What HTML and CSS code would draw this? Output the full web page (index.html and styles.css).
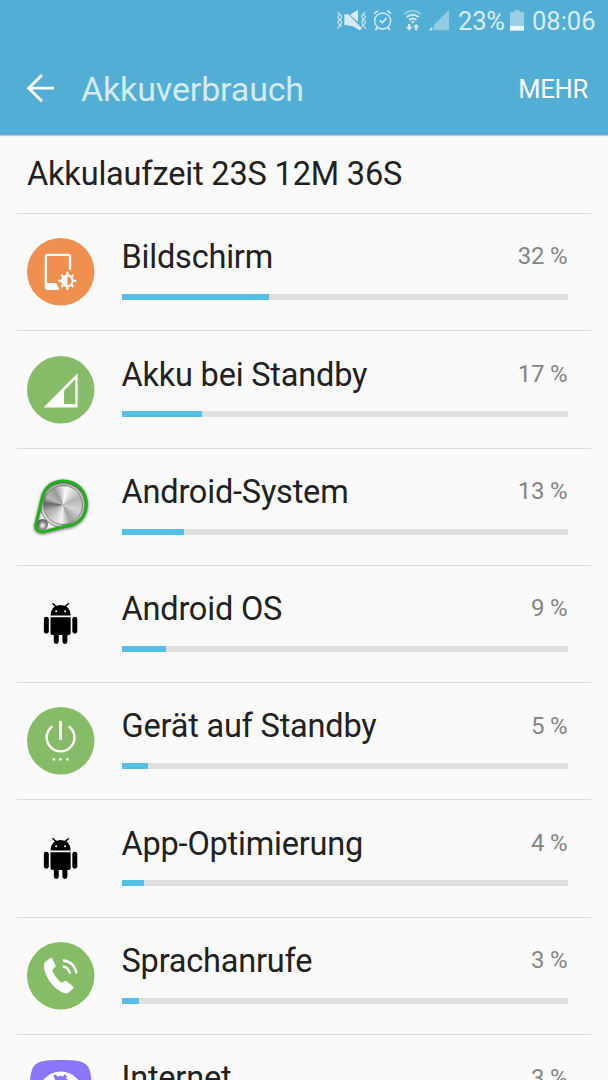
FILE: index.html
```html
<!DOCTYPE html>
<html lang="de">
<head>
<meta charset="utf-8">
<title>Akkuverbrauch</title>
<link rel="stylesheet" href="styles.css">
</head>
<body>
<div class="screen">
  <header class="header">
    <div class="status">
      <svg class="status-icons" viewBox="0 0 360 132">
        <g fill="none" stroke="#d4eaf4" stroke-width="4">
          <path d="M29 36l6 7-6 8 6 8-6 8 6 8-7 12M38 42l3 8-4 8 4 9-4 8 3 7" stroke-width="3.2"/>
          <path d="M112 36l-6 7 7 8-7 8 7 8-7 8 8 12M104 42l-3 8 4 8-4 9 4 8-3 7" stroke-width="3.2"/>
          <circle cx="164" cy="63" r="24"/>
          <path d="M155 61l8 7 13-14M139 41l11-9M189 41l-11-9M149 82l-7 8M179 82l7 8" stroke-width="5"/>
        </g>
        <g fill="#d4eaf4">
          <path d="M49 43h12l41 42-7 6-21-12-25-5zM66 44l24-15v37z"/>
          <path d="M240 72h7v8h6l-9.500 12-9.500-12h6zM261 91h7v-9h6l-9.500-11-9.500 11h6z"/>
          <path d="M313 80v11h-11z"/>
        </g>
        <g fill="none" stroke="#d4eaf4" stroke-width="6">
          <path d="M229 42q25-19 50 0" opacity=".5"/>
          <path d="M236 51q18-14 36 0"/>
          <path d="M243 60q11-9 22 0"/>
        </g>
        <circle cx="254" cy="66" r="4" fill="#d4eaf4"/>
        <path d="M363 30v61h-46V76z" fill="#94cae2"/>
      </svg>
      <span class="charge">23%</span>
      <svg class="battery" viewBox="0 0 42 66"><path d="M0 7h13V1h16v6h13v42H0z" fill="#9dcee4"/><path d="M0 48h42v14H0z" fill="#eef7fb"/></svg>
      <span class="clock">08:06</span>
    </div>
    <div class="toolbar">
      <svg class="back" viewBox="0 0 84 84"><path d="M81 42.500H6M45 3L5 42.500 45 82" fill="none" stroke="#fff" stroke-width="8.500"/></svg>
      <h1 class="title">Akkuverbrauch</h1>
      <span class="more">MEHR</span>
    </div>
  </header>
  <main class="content">
    <div class="runtime">Akkulaufzeit 23S 12M 36S</div>
    <ul class="list">
      <li class="row">
        <svg class="icon" viewBox="33 30 204 204">
          <circle cx="135" cy="132" r="102" fill="#ef9050"/>
          <path d="M163 126V87q0-6-6-6H96q-6 0-6 6v90q0 6 6 6h32" fill="none" stroke="#fff" stroke-width="7"/>
          <path d="M90 166h31l10 20H96q-6 0-6-6z" fill="#fff"/>
          <circle cx="155" cy="159.500" r="16" fill="none" stroke="#fff" stroke-width="6"/>
          <path d="M155 143a16.500 16.500 0 0 0 0 33z" fill="#fff"/>
          <path d="M155 142v-10M155 177v10M137 159.500h-9M173 159.500h9M142.500 147l-6-6M167.500 147l6-6M142.500 172l-6 6M167.500 172l6 6" stroke="#fff" stroke-width="6.500"/>
        </svg>
        <div class="body"><div class="line"><span class="name">Bildschirm</span><span class="pct">32 %</span></div><div class="bar"><div class="fill" style="width:33%"></div></div></div>
      </li>
      <li class="row">
        <svg class="icon" viewBox="33 30 204 204">
          <circle cx="135" cy="132" r="102" fill="#86bc68"/>
          <path fill-rule="evenodd" d="M186 82v104H83zM179 100l-34 35v40h34z" fill="#fff"/>
        </svg>
        <div class="body"><div class="line"><span class="name">Akku bei Standby</span><span class="pct">17 %</span></div><div class="bar"><div class="fill" style="width:18%"></div></div></div>
      </li>
      <li class="row">
        <div class="icon knob">
          <div class="knob-face"></div>
          <div class="knob-small"></div>
          <svg class="knob-ring" viewBox="33 30 204 204">
            <path d="M78 107C85 70 112 54 142 54C182 54 211 83 211 123C211 163 184 186 149 190L82 206C65 208 56 197 60 183Z" fill="none" stroke="#20b01c" stroke-width="9"/>
          </svg>
        </div>
        <div class="body"><div class="line"><span class="name">Android-System</span><span class="pct">13 %</span></div><div class="bar"><div class="fill" style="width:14%"></div></div></div>
      </li>
      <li class="row">
        <svg class="icon" viewBox="33 30 204 204">
          <path d="M104 107q1-32 30.500-32t30.500 32z"/>
          <path d="M110 70l4 4 7 7M159 70l-4 4-7 7" fill="none" stroke="#000" stroke-width="4.500"/>
          <path d="M104 112h61v49q0 5-6 5h-4v20q0 7-7.500 7t-7.500-7v-20h-11v20q0 7-7.500 7t-7.500-7v-20h-4q-6 0-6-5z"/>
          <rect x="84" y="111" width="15" height="51" rx="7.500"/><rect x="170" y="111" width="15" height="51" rx="7.500"/>
          <circle cx="121" cy="94" r="3" fill="#fff"/><circle cx="148" cy="94" r="3" fill="#fff"/>
        </svg>
        <div class="body"><div class="line"><span class="name">Android OS</span><span class="pct">9 %</span></div><div class="bar"><div class="fill" style="width:10%"></div></div></div>
      </li>
      <li class="row">
        <svg class="icon" viewBox="33 30 204 204">
          <circle cx="135" cy="132" r="102" fill="#86bc68"/>
          <path d="M110 88A42 42 0 1 0 159 88" fill="none" stroke="#fff" stroke-width="7.500"/>
          <path d="M134 72v57" stroke="#fff" stroke-width="9"/>
          <path d="M110 185h8v7h-8zM130 185h8v7h-8zM151 185h8v7h-8z" fill="#fff"/>
        </svg>
        <div class="body"><div class="line"><span class="name">Gerät auf Standby</span><span class="pct">5 %</span></div><div class="bar"><div class="fill" style="width:6%"></div></div></div>
      </li>
      <li class="row">
        <svg class="icon" viewBox="33 30 204 204">
          <path d="M104 107q1-32 30.500-32t30.500 32z"/>
          <path d="M110 70l4 4 7 7M159 70l-4 4-7 7" fill="none" stroke="#000" stroke-width="4.500"/>
          <path d="M104 112h61v49q0 5-6 5h-4v20q0 7-7.500 7t-7.500-7v-20h-11v20q0 7-7.500 7t-7.500-7v-20h-4q-6 0-6-5z"/>
          <rect x="84" y="111" width="15" height="51" rx="7.500"/><rect x="170" y="111" width="15" height="51" rx="7.500"/>
          <circle cx="121" cy="94" r="3" fill="#fff"/><circle cx="148" cy="94" r="3" fill="#fff"/>
        </svg>
        <div class="body"><div class="line"><span class="name">App-Optimierung</span><span class="pct">4 %</span></div><div class="bar"><div class="fill" style="width:5%"></div></div></div>
      </li>
      <li class="row">
        <svg class="icon" viewBox="33 30 204 204">
          <circle cx="135" cy="132" r="102" fill="#86bc68"/>
          <path d="M87 91l15-12q5-3 8 2l9 19q2 5-2 7l-7 6q-1 3 1 7 8 18 22 30 5 4 8 2l6-4q4-2 7 1l17 14q5 4 1 8l-12 11q-5 5-15 2C115 174 86 136 84 101q0-6 3-10z" fill="#fff"/>
          <path d="M141 104q17 1 22 22M141 86q34 2 42 39" fill="none" stroke="#fff" stroke-width="7"/>
        </svg>
        <div class="body"><div class="line"><span class="name">Sprachanrufe</span><span class="pct">3 %</span></div><div class="bar"><div class="fill" style="width:4%"></div></div></div>
      </li>
      <li class="row">
        <svg class="icon" viewBox="33 30 204 204">
          <path d="M135 33C190 33 212 38 221 60Q229 80 229 132Q229 231 135 231Q41 231 41 132Q41 80 49 60C58 38 80 33 135 33z" fill="#8c75fb"/>
          <circle cx="135" cy="136" r="68" fill="#fff"/>
          <path d="M112 80l8-3 6 7 7-3 8 2 6-7 7 6-3 8 10 4-6 18h-36l-8-10 8-8z" fill="#8c75fb"/>
        </svg>
        <div class="body"><div class="line"><span class="name">Internet</span><span class="pct">3 %</span></div><div class="bar"><div class="fill" style="width:4%"></div></div></div>
      </li>
    </ul>
  </main>
</div>
</body>
</html>
```
FILE: styles.css
```css
* { box-sizing: border-box; }
html, body { margin: 0; height: 1080px; overflow: hidden; }
body { font-family: Roboto, "Liberation Sans", sans-serif; background: #fafafa; color: #212121; }
.screen { width: 608px; height: 1080px; overflow: hidden; background: #fafafa; }
.header { height: 135px; background: #52aed5; box-shadow: 0 1px 1px rgba(0,0,0,.22); position: relative; }
.status { height: 44px; display: flex; align-items: flex-start; color: #d9edf6; font-size: 25.5px; line-height: 43px; padding-left: 328px; white-space: nowrap; }
.status-icons { width: 120px; height: 44px; flex: none; overflow: visible; }
.charge { margin-left: 10px; width: 52px; flex: none; letter-spacing: -.2px; }
.battery { width: 14px; height: 22px; margin-top: 10px; flex: none; }
.clock { margin-left: 8px; }
.toolbar { height: 91px; display: flex; align-items: flex-start; padding: 0 20px 0 27px; }
.back { width: 28px; height: 28px; margin-top: 30px; flex: none; overflow: visible; }
.title { margin: 23px 0 0 26px; flex: 1; font-size: 34px; font-weight: 400; line-height: 44px; letter-spacing: -.15px; color: #d4eaf4; }
.more { margin-top: 25px; font-size: 25.5px; line-height: 40px; letter-spacing: -.2px; color: #fff; }
.runtime { height: 78px; padding: 19px 27px 0; font-size: 32.5px; line-height: 40px; letter-spacing: -.17px; white-space: nowrap; }
.list { list-style: none; margin: 0; padding: 0 17px; }
.row { height: 117.3px; display: flex; border-top: 1px solid #dcdcdc; padding: 24.3px 23.5px 0 10px; }
.icon { width: 67.5px; height: 67.5px; flex: none; overflow: visible; }
.body { flex: 1; margin-left: 27px; }
.line { height: 56px; display: flex; justify-content: space-between; align-items: flex-start; margin-top: -1px; }
.name { font-size: 32.5px; line-height: 40px; letter-spacing: -.2px; white-space: nowrap; }
.pct { margin-top: .2px; font-size: 24px; line-height: 39px; letter-spacing: -.2px; color: #858585; }
.bar { height: 6px; margin-top: .7px; background: #e0e0df; }
.fill { height: 6px; background: #55c0e5; }
.knob { display: grid; }
.knob > * { grid-area: 1 / 1; }
.knob-face { width: 40px; height: 40px; margin: 12px 0 0 16px; border-radius: 50%; border: 1.5px solid #888; background: conic-gradient(from 10deg, #fafafa, #b5b5b5 55deg, #d5d5d5 100deg, #a0a0a0 145deg, #f2f2f2 175deg, #ccc 210deg, #aaa 240deg, #666 265deg, #bbb 285deg, #999 320deg, #fafafa); box-shadow: 0 0 0 2px #ddd, 0 0 0 3px #888; }
.knob-small { width: 11px; height: 11px; margin: 46px 0 0 10px; border-radius: 50%; background: radial-gradient(circle at 50% 60%, #fff, #888 45%, #333); }
.knob-ring { width: 68px; height: 68px; overflow: visible; filter: drop-shadow(0 1px 1.5px rgba(0,0,0,.6)); }
```
